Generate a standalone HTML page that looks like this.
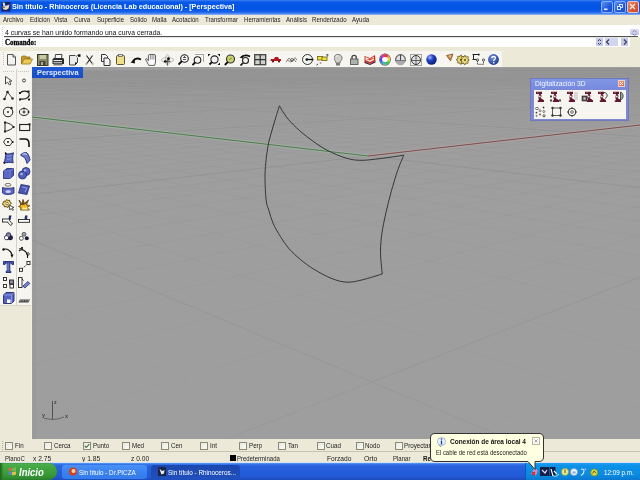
<!DOCTYPE html><html><head><meta charset="utf-8"><style>
*{margin:0;padding:0;box-sizing:border-box}
html,body{width:640px;height:480px;overflow:hidden;background:#ece9d8;font-family:"Liberation Sans",sans-serif;font-size:8px;color:#000}
div,span,svg{position:absolute}
.t{white-space:nowrap;transform-origin:0 0;line-height:1}
</style></head><body><div style="left:0px;top:0px;width:640px;height:15px;background:linear-gradient(#3a7ef0 0px,#0a58e8 2px,#0254e4 9px,#1a62ea 12px,#4a86f2 13.5px,#9ab8f0 15px);"></div>
<svg style="left:1px;top:1px;" width="10" height="12" viewBox="0 0 10 12"><rect x="0.5" y="1" width="9" height="9.5" fill="#14206a"/><path d="M1.5 1.5 L3.5 1.5 L4.5 4.5 L2.5 5.5 Z" fill="#c8e0ff"/><path d="M1.5 5.5 L5 4.8 L8.5 3.5 L7.5 7.5 L5 9 L2.2 8.3 Z" fill="#e8dcc0"/><circle cx="3" cy="6.3" r="0.7" fill="#222"/></svg>
<span class="t" style="left:12px;top:3px;font-size:8px;color:#fff;transform:scaleX(0.9);font-weight:bold;">Sin título - Rhinoceros (Licencia Lab educacional) - [Perspectiva]</span>
<div style="left:601px;top:1px;width:12px;height:12px;background:linear-gradient(135deg,#5a90f6,#2058dc 60%,#1a4ed0);border:1px solid #8ab0f8;border-radius:2px;"></div>
<svg style="left:601px;top:1px;" width="12" height="12" viewBox="0 0 12 12"><rect x="3" y="7.5" width="3.5" height="1.6" fill="#e8f0ff"/></svg>
<div style="left:614px;top:1px;width:12px;height:12px;background:linear-gradient(135deg,#5a90f6,#2058dc 60%,#1a4ed0);border:1px solid #8ab0f8;border-radius:2px;"></div>
<svg style="left:614px;top:1px;" width="12" height="12" viewBox="0 0 12 12"><rect x="5.5" y="3.5" width="3" height="3" fill="none" stroke="#e8f0ff" stroke-width="0.9"/><rect x="3.5" y="5.5" width="3" height="3" fill="#2058dc" stroke="#e8f0ff" stroke-width="0.9"/></svg>
<div style="left:627px;top:1px;width:12px;height:12px;background:linear-gradient(135deg,#e88a6a,#d85a38 60%,#c84a30);border:1px solid #f4c4bc;border-radius:2px;"></div>
<svg style="left:627px;top:1px;" width="12" height="12" viewBox="0 0 12 12"><path d="M3 3 L8 8 M8 3 L3 8" stroke="#ffe8e0" stroke-width="1.3"/></svg>
<div style="left:0px;top:15px;width:640px;height:10px;background:#ece9d8;"></div>
<span class="t" style="left:3px;top:15.8px;font-size:7px;color:#222;transform:scaleX(0.87);">Archivo</span>
<span class="t" style="left:30px;top:15.8px;font-size:7px;color:#222;transform:scaleX(0.87);">Edición</span>
<span class="t" style="left:54px;top:15.8px;font-size:7px;color:#222;transform:scaleX(0.87);">Vista</span>
<span class="t" style="left:74px;top:15.8px;font-size:7px;color:#222;transform:scaleX(0.87);">Curva</span>
<span class="t" style="left:97px;top:15.8px;font-size:7px;color:#222;transform:scaleX(0.87);">Superficie</span>
<span class="t" style="left:130px;top:15.8px;font-size:7px;color:#222;transform:scaleX(0.87);">Sólido</span>
<span class="t" style="left:152px;top:15.8px;font-size:7px;color:#222;transform:scaleX(0.87);">Malla</span>
<span class="t" style="left:172px;top:15.8px;font-size:7px;color:#222;transform:scaleX(0.87);">Acotación</span>
<span class="t" style="left:205px;top:15.8px;font-size:7px;color:#222;transform:scaleX(0.87);">Transformar</span>
<span class="t" style="left:244px;top:15.8px;font-size:7px;color:#222;transform:scaleX(0.87);">Herramientas</span>
<span class="t" style="left:286px;top:15.8px;font-size:7px;color:#222;transform:scaleX(0.87);">Análisis</span>
<span class="t" style="left:312px;top:15.8px;font-size:7px;color:#222;transform:scaleX(0.87);">Renderizado</span>
<span class="t" style="left:352px;top:15.8px;font-size:7px;color:#222;transform:scaleX(0.87);">Ayuda</span>
<div style="left:0px;top:25px;width:640px;height:22px;background:#fff;"></div>
<div style="left:4px;top:36px;width:634px;height:1px;background:#505050;"></div>
<div style="left:4px;top:37px;width:634px;height:1px;background:#e4e4e4;"></div>
<svg style="left:1px;top:27px;" width="3" height="20" viewBox="0 0 3 20"><rect x="1" y="0" width="1" height="1" fill="#d4d2c8"/><rect x="1" y="2" width="1" height="1" fill="#d4d2c8"/><rect x="1" y="4" width="1" height="1" fill="#d4d2c8"/><rect x="1" y="6" width="1" height="1" fill="#d4d2c8"/><rect x="1" y="8" width="1" height="1" fill="#d4d2c8"/><rect x="1" y="10" width="1" height="1" fill="#d4d2c8"/><rect x="1" y="12" width="1" height="1" fill="#d4d2c8"/><rect x="1" y="14" width="1" height="1" fill="#d4d2c8"/><rect x="1" y="16" width="1" height="1" fill="#d4d2c8"/><rect x="1" y="18" width="1" height="1" fill="#d4d2c8"/></svg>
<span class="t" style="left:5px;top:28.6px;font-size:7.5px;color:#111;transform:scaleX(0.915);">4 curvas se han unido formando una curva cerrada.</span>
<span class="t" style="left:5px;top:38.6px;font-size:7.3px;color:#000;transform:scaleX(0.95);font-weight:bold;font-family:'Liberation Serif',serif;-webkit-text-stroke:0.3px #000;">Comando:</span>
<div style="left:630px;top:28.5px;width:9px;height:6.5px;background:linear-gradient(#dcdff2,#c4c8e6);border-radius:1px;"></div>
<svg style="left:630px;top:28.5px;" width="9" height="7" viewBox="0 0 9 7"><path d="M2.5 3 L4.5 1.5 L6.5 3 M2.5 5 L4.5 6.3 L6.5 5" fill="none" stroke="#6a70a0" stroke-width="0.8"/></svg>
<div style="left:596px;top:38px;width:7px;height:8px;background:#c6cae6;"></div>
<div style="left:605px;top:38px;width:13px;height:8px;background:#d2d5ee;"></div>
<div style="left:621px;top:38px;width:7px;height:8px;background:#c6cae6;"></div>
<div style="left:630px;top:37px;width:10px;height:10px;background:#ece9d8;"></div>
<svg style="left:596px;top:38px;" width="32" height="8" viewBox="0 0 32 8"><path d="M2 3 L3.5 1.5 L5 3 M2 5 L3.5 6.5 L5 5" stroke="#3a4070" fill="none"/><path d="M13 1.5 L10.5 4 L13 6.5" stroke="#3a4070" fill="none" stroke-width="1.3"/><path d="M28 1.5 L30.5 4 L28 6.5" stroke="#3a4070" fill="none" stroke-width="1.3"/></svg>
<div style="left:0px;top:47px;width:640px;height:20px;background:#ece9d8;"></div>
<div style="left:0px;top:51px;width:502px;height:16px;background:#f6f5ef;"></div>
<svg style="left:2px;top:52px;" width="3" height="14" viewBox="0 0 3 14"><rect x="1" y="0" width="1" height="1" fill="#cac6b8"/><rect x="1" y="2" width="1" height="1" fill="#cac6b8"/><rect x="1" y="4" width="1" height="1" fill="#cac6b8"/><rect x="1" y="6" width="1" height="1" fill="#cac6b8"/><rect x="1" y="8" width="1" height="1" fill="#cac6b8"/><rect x="1" y="10" width="1" height="1" fill="#cac6b8"/><rect x="1" y="12" width="1" height="1" fill="#cac6b8"/></svg>
<svg style="left:7px;top:54px;" width="14" height="13" viewBox="0 0 14 13"><path d="M0.5 0.5 H6 L8.5 3 V11 H0.5 Z" fill="#f2f2f2" stroke="#555"/><path d="M6 0.5 V3 H8.5" fill="#ccc" stroke="#555"/></svg>
<svg style="left:21px;top:55px;" width="14" height="13" viewBox="0 0 14 13"><path d="M0.5 2 L1.5 1 H4.5 L5.5 2 H9 V4 H3 L0.5 9 Z" fill="#c89a2a" stroke="#8a6a10" stroke-width="0.8"/><path d="M0.5 9 L3 4 H11.5 L9 9 Z" fill="#ecc85a" stroke="#9a7a18" stroke-width="0.8"/></svg>
<svg style="left:37px;top:54px;" width="14" height="13" viewBox="0 0 14 13"><rect x="0.5" y="0.5" width="10.5" height="11" fill="#8c8c64" stroke="#3a3a28"/><rect x="2.5" y="1" width="6.5" height="4" fill="#c8c8a8"/><rect x="2.5" y="7" width="6" height="4.5" fill="#44443a"/><rect x="4" y="8" width="2" height="3" fill="#aaa"/></svg>
<svg style="left:52px;top:54px;" width="14" height="13" viewBox="0 0 14 13"><path d="M3.5 0.5 H10 L9.5 4.5 H3 Z" fill="#f4f4f4" stroke="#333" stroke-width="0.9"/><path d="M0.5 5 L2 4 H11 L12 5 V10 H0.5 Z" fill="#2a2a2a"/><rect x="1.5" y="6" width="8.5" height="1.1" fill="#e8e8e8"/><rect x="1.5" y="8.2" width="8.5" height="1.1" fill="#d8d8d8"/><rect x="1.5" y="10" width="9" height="1.5" fill="#777"/></svg>
<svg style="left:69px;top:54px;" width="14" height="13" viewBox="0 0 14 13"><path d="M0.5 1.5 H6.5 L8.5 3.5 V8.5 L6 11 H0.5 Z" fill="#ececec" stroke="#333" stroke-width="0.9"/><path d="M8.5 8.5 L6 11 V8.5 Z" fill="#111"/><path d="M6.3 1 L8.5 3.2" stroke="#fff" stroke-width="1"/><rect x="9" y="0.3" width="2.5" height="2.5" fill="#111"/><path d="M7 2.5 L9.5 0.8" stroke="#555" stroke-width="0.8"/></svg>
<svg style="left:85px;top:55px;" width="14" height="13" viewBox="0 0 14 13"><path d="M1.5 0.5 L7.5 9 M7.5 0.5 L1.5 9" stroke="#222" stroke-width="1.1"/><path d="M0.5 9.5 L2.5 8 M8.5 9.5 L6.5 8" stroke="#aaa" stroke-width="1.6"/></svg>
<svg style="left:101px;top:54px;" width="14" height="13" viewBox="0 0 14 13"><path d="M0.5 0.5 H4.5 L6.5 2.5 V7.5 H0.5 Z" fill="#f4f4f4" stroke="#333"/><path d="M3 4 H7 L9 6 V11.5 H3 Z" fill="#f4f4f4" stroke="#333"/></svg>
<svg style="left:116px;top:54px;" width="14" height="13" viewBox="0 0 14 13"><rect x="0.5" y="1.5" width="8" height="9" rx="1" fill="#ede088" stroke="#5a5430"/><rect x="2.5" y="0.3" width="4" height="2.2" fill="#ddd" stroke="#555" stroke-width="0.7"/></svg>
<svg style="left:130px;top:56px;" width="14" height="13" viewBox="0 0 14 13"><path d="M3 5 Q6 1 11 3.5" fill="none" stroke="#111" stroke-width="1.8"/><path d="M0.5 6.5 L4.5 3 L5 7.5 Z" fill="#111"/></svg>
<svg style="left:145px;top:54px;" width="14" height="13" viewBox="0 0 14 13"><path d="M0.5 5.2 L1.6 4.6 L3.4 6.8 V1.8 Q3.4 0.5 4.6 0.5 H9.2 Q10.5 0.5 10.5 1.8 V8 L9.6 11.4 H3.8 Z" fill="#fbfbfb" stroke="#3a3a3a" stroke-width="0.8"/><path d="M5.4 1 V5.5 M7.1 1 V5.5 M8.8 1 V5.5" stroke="#888" stroke-width="0.9"/></svg>
<svg style="left:161px;top:54px;" width="14" height="13" viewBox="0 0 14 13"><ellipse cx="6.5" cy="6" rx="6" ry="2.6" fill="none" stroke="#b8b8b8" stroke-width="0.9"/><ellipse cx="6.5" cy="6" rx="1.8" ry="5.3" fill="none" stroke="#aaa" stroke-width="0.9"/><path d="M6.5 4 V11.5 M4 7.5 H9.5" stroke="#444" stroke-width="0.8"/><ellipse cx="7.6" cy="4.8" rx="1.2" ry="1.6" fill="#111"/><ellipse cx="4.3" cy="7.4" rx="1.6" ry="1.1" fill="#111"/></svg>
<svg style="left:178px;top:54px;" width="14" height="13" viewBox="0 0 14 13"><circle cx="6.5" cy="4.5" r="3.8" fill="#f4f4f4" stroke="#222" stroke-width="1.1"/><path d="M4 7 L0.5 10.5" stroke="#111" stroke-width="1.8"/><path d="M5 3.5 H8 M5 5.5 H8 M6.5 2 V3.5" stroke="#333" stroke-width="0.8"/></svg>
<svg style="left:192px;top:54px;" width="14" height="13" viewBox="0 0 14 13"><path d="M3.5 0.5 H11.5 V8.5" fill="none" stroke="#555" stroke-dasharray="1 1"/><circle cx="5.5" cy="6" r="3.3" fill="#f4f4f4" stroke="#222" stroke-width="1.1"/><path d="M3 8.5 L0.5 11" stroke="#111" stroke-width="1.8"/></svg>
<svg style="left:208px;top:54px;" width="14" height="13" viewBox="0 0 14 13"><circle cx="6.5" cy="5.5" r="3.6" fill="#f4f4f4" stroke="#222" stroke-width="1.1"/><path d="M4 8 L1.5 10.5" stroke="#111" stroke-width="1.8"/><path d="M0 0 H2.5 L0 2.5 Z M12 0 V2.5 L9.5 0 Z M12 11 H9.5 L12 8.5 Z" fill="#111"/></svg>
<svg style="left:224px;top:54px;" width="14" height="13" viewBox="0 0 14 13"><circle cx="6.5" cy="5" r="4" fill="#c8d070" stroke="#333" stroke-width="1.1"/><path d="M5 6 L7 4 L8 5" stroke="#8a9430" fill="none"/><path d="M3.8 8 L0.8 11" stroke="#111" stroke-width="1.8"/></svg>
<svg style="left:239px;top:54px;" width="14" height="13" viewBox="0 0 14 13"><path d="M3 3 Q6 0 11 2.5" fill="none" stroke="#111" stroke-width="1.6"/><path d="M0.5 3.5 L4 1 L4 4.5 Z" fill="#111"/><circle cx="6.5" cy="6.5" r="3" fill="#f4f4f4" stroke="#222" stroke-width="1.1"/><path d="M4 9 L1.5 11.5" stroke="#111" stroke-width="1.7"/></svg>
<svg style="left:254px;top:54px;" width="14" height="13" viewBox="0 0 14 13"><rect x="0.7" y="0.7" width="11" height="10" fill="#d0d0cc" stroke="#444" stroke-width="1.3"/><path d="M6.2 0.7 V10.7 M0.7 5.7 H11.7" stroke="#333" stroke-width="1.2"/></svg>
<svg style="left:270px;top:56px;" width="14" height="13" viewBox="0 0 14 13"><path d="M0.5 4.5 L1 3 H4 L5 1 H8 L9 3 H11 V5 H0.5 Z" fill="#b01820"/><circle cx="3" cy="5.5" r="1" fill="#500"/><circle cx="9" cy="5.5" r="1" fill="#500"/></svg>
<svg style="left:285px;top:56px;" width="14" height="13" viewBox="0 0 14 13"><path d="M1 6 L4 2 L7 5 L10 1.5 L12 4 M2 4 L6 6 L9 3 L11 6" fill="none" stroke="#777" stroke-width="0.9"/><circle cx="7" cy="4" r="1.5" fill="none" stroke="#555" stroke-width="0.8"/></svg>
<svg style="left:302px;top:54px;" width="14" height="13" viewBox="0 0 14 13"><circle cx="5.5" cy="5.5" r="5" fill="#f6f6f0" stroke="#222" stroke-width="0.9"/><path d="M4.5 5.5 H11.5" stroke="#111" stroke-width="1.3"/><circle cx="4.8" cy="5.5" r="1.3" fill="#111"/></svg>
<svg style="left:316px;top:54px;" width="14" height="13" viewBox="0 0 14 13"><rect x="1.5" y="2.5" width="5" height="3.5" fill="#f0e040" stroke="#6a6010" stroke-width="0.8"/><rect x="6" y="3" width="5" height="3.5" fill="#f0e040" stroke="#6a6010" stroke-width="0.8"/><path d="M10 1 L12 0.5 L11.5 2.5" fill="none" stroke="#333" stroke-width="0.8"/><path d="M0.5 11 L2 10" stroke="#333"/><circle cx="4.5" cy="9" r="1" fill="#c090b0"/></svg>
<svg style="left:334px;top:54px;" width="14" height="13" viewBox="0 0 14 13"><path d="M4 0.5 C7 0.5 8 2.5 8 4 C8 6 6.2 7 6 9 H2 C1.8 7 0 6 0 4 C0 2.5 1 0.5 4 0.5 Z" fill="#d0d0cc" stroke="#6a6a6a" stroke-width="0.9"/><path d="M2 2.5 C2.5 1.8 3.5 1.5 4.5 1.6" stroke="#f4f4f4" fill="none"/><rect x="2" y="9" width="4" height="2.5" fill="#7a7a7a"/></svg>
<svg style="left:350px;top:54px;" width="14" height="13" viewBox="0 0 14 13"><path d="M2 5 V3.2 C2 0.8 6.2 0.8 6.2 3.2 V5" fill="none" stroke="#444" stroke-width="1.4"/><rect x="0.5" y="5" width="7.5" height="5.5" fill="#b0b0ac" stroke="#555" stroke-width="0.9"/></svg>
<svg style="left:364px;top:54px;" width="14" height="13" viewBox="0 0 14 13"><path d="M0.5 2 L6 4 L11 1 L11.5 7 L6 10 L0.5 7.5 Z" fill="#c83020"/><path d="M1.5 3 L6 5 L10 2.5 L10 6 L6 8 L1.5 6 Z" fill="#f8f0f0"/><path d="M2 5 L6 6.5 L10 4.5 L10 3.5 L6 5 Z" fill="#e04828"/><path d="M0.5 7.5 L6 10 L11.5 7 L11.5 8.5 L6 11 L0.5 9 Z" fill="#402048"/></svg>
<div style="left:379.5px;top:54px;width:10.5px;height:10.5px;background:conic-gradient(from 20deg,#f03030,#f0e040,#40c040,#40c0c0,#3040e0,#c040c0,#f03030);border-radius:50%;box-shadow:0 0 0 0.6px #333;"></div>
<div style="left:382px;top:56.5px;width:5.5px;height:5.5px;background:radial-gradient(#ffffff,#f8e8f8);border-radius:50%;"></div>
<svg style="left:395px;top:54px;" width="14" height="13" viewBox="0 0 14 13"><circle cx="5.5" cy="5.5" r="4.8" fill="#e0e0e0" stroke="#333" stroke-width="1"/><path d="M5.5 0.7 V10.3 M0.7 6.5 H10.3" stroke="#333" stroke-width="0.9"/><path d="M0.7 6.5 A4.8 4.8 0 0 0 10.3 6.5 Z" fill="#aaa"/></svg>
<svg style="left:410px;top:54px;" width="14" height="13" viewBox="0 0 14 13"><rect x="0.5" y="0.5" width="11" height="11" fill="none" stroke="#555" stroke-dasharray="1 1"/><circle cx="6" cy="6" r="4.5" fill="#e0e0e0" stroke="#333" stroke-width="1"/><path d="M6 1.5 V10.5 M1.5 6.5 H10.5" stroke="#444" stroke-width="0.8"/></svg>
<svg style="left:426px;top:54px;" width="14" height="13" viewBox="0 0 14 13"><defs><radialGradient id="bs" cx="0.35" cy="0.3" r="0.8"><stop offset="0" stop-color="#a0b8ff"/><stop offset="0.4" stop-color="#2040c0"/><stop offset="1" stop-color="#081868"/></radialGradient></defs><circle cx="5.5" cy="5.5" r="5.2" fill="url(#bs)"/></svg>
<svg style="left:446px;top:53px;" width="14" height="13" viewBox="0 0 14 13"><path d="M0.5 2.5 L7 1 L4.5 7.8 Z" fill="#c88a48" stroke="#6a4420" stroke-width="0.7"/><path d="M2.5 2.8 L5.5 2 L4.3 5" fill="#f0c890"/></svg>
<svg style="left:456px;top:54px;" width="15" height="13" viewBox="0 0 15 13"><path d="M3.5 1 L4.5 1 L4.8 2.2 L6 2.6 L6.8 1.8 L7.5 2.6 L6.9 3.6 L7.3 4.8 L8 5 V6 L7 6.3 L6.6 7.5 L7.3 8.3 L6.5 9.1 L5.6 8.5 L4.5 8.9 L4.3 10 H3.3 L3 8.9 L1.9 8.5 L1 9.1 L0.3 8.3 L0.9 7.4 L0.6 6.3 L-0.4 6 V5 L0.6 4.7 L1 3.6 L0.4 2.6 L1.2 1.8 L2.1 2.4 L3.2 2.1 Z" transform="translate(1,0.2)" fill="#e8d878" stroke="#5a5020" stroke-width="0.8"/><path d="M3.5 1 L4.5 1 L4.8 2.2 L6 2.6 L6.8 1.8 L7.5 2.6 L6.9 3.6 L7.3 4.8 L8 5 V6 L7 6.3 L6.6 7.5 L7.3 8.3 L6.5 9.1 L5.6 8.5 L4.5 8.9 L4.3 10 H3.3 L3 8.9 L1.9 8.5 L1 9.1 L0.3 8.3 L0.9 7.4 L0.6 6.3 L-0.4 6 V5 L0.6 4.7 L1 3.6 L0.4 2.6 L1.2 1.8 L2.1 2.4 L3.2 2.1 Z" transform="translate(5,0.6)" fill="#e8d878" stroke="#5a5020" stroke-width="0.8"/><circle cx="5" cy="5.7" r="1" fill="#5a5020"/><circle cx="9" cy="6.1" r="1" fill="#5a5020"/></svg>
<svg style="left:472px;top:53px;" width="14" height="13" viewBox="0 0 14 13"><path d="M0.5 1.5 H6.5 M1.5 1.5 V6.5 M0.5 6.5 H4.5" fill="none" stroke="#222" stroke-width="1"/><rect x="6" y="0.8" width="1.6" height="1.6" fill="#111"/><circle cx="5.5" cy="7" r="1.1" fill="#fff" stroke="#222" stroke-width="0.8"/><circle cx="11.5" cy="7" r="1.1" fill="#fff" stroke="#222" stroke-width="0.8"/><path d="M5.5 8.2 V11.3 H11.5 V8.2" fill="none" stroke="#222" stroke-width="0.9" stroke-dasharray="1.2 0.8"/></svg>
<svg style="left:488px;top:54px;" width="14" height="13" viewBox="0 0 14 13"><defs><radialGradient id="hp" cx="0.4" cy="0.35" r="0.75"><stop offset="0" stop-color="#7090e0"/><stop offset="1" stop-color="#182e88"/></radialGradient></defs><circle cx="5.5" cy="5.5" r="5.4" fill="url(#hp)"/><path d="M3.8 4 C3.8 2 7.4 2 7.4 4 C7.4 5.5 5.6 5.3 5.6 7" fill="none" stroke="#fff" stroke-width="1.3"/><rect x="5" y="8" width="1.4" height="1.4" fill="#fff"/></svg>
<div style="left:0px;top:67px;width:32px;height:372px;background:#ece9d8;"></div>
<div style="left:0px;top:67px;width:31px;height:239px;background:#f6f5ef;"></div>
<div style="left:16px;top:69px;width:1px;height:236px;background:#d4d2c8;"></div>
<div style="left:0px;top:305px;width:31px;height:1px;background:#d8d6ca;"></div>
<svg style="left:3px;top:71px;" width="28" height="2" viewBox="0 0 28 2"><rect x="0" y="0" width="1" height="1" fill="#c4c0b2"/><rect x="2" y="0" width="1" height="1" fill="#c4c0b2"/><rect x="4" y="0" width="1" height="1" fill="#c4c0b2"/><rect x="6" y="0" width="1" height="1" fill="#c4c0b2"/><rect x="8" y="0" width="1" height="1" fill="#c4c0b2"/><rect x="10" y="0" width="1" height="1" fill="#c4c0b2"/><rect x="15" y="0" width="1" height="1" fill="#c4c0b2"/><rect x="17" y="0" width="1" height="1" fill="#c4c0b2"/><rect x="19" y="0" width="1" height="1" fill="#c4c0b2"/><rect x="21" y="0" width="1" height="1" fill="#c4c0b2"/><rect x="23" y="0" width="1" height="1" fill="#c4c0b2"/><rect x="25" y="0" width="1" height="1" fill="#c4c0b2"/></svg>
<svg style="left:5px;top:76px;" width="13" height="13" viewBox="0 0 13 13"><path d="M0.5 0.5 V8 L2.5 6.2 L4.5 9 L6 8 L4.2 5.3 L6.8 5 Z" fill="#fff" stroke="#333" stroke-width="0.9"/></svg>
<svg style="left:21px;top:78px;" width="13" height="13" viewBox="0 0 13 13"><circle cx="3" cy="2.5" r="1.5" fill="none" stroke="#333" stroke-width="0.9"/></svg>
<svg style="left:3px;top:90px;" width="13" height="13" viewBox="0 0 13 13"><path d="M4.5 2 L1.5 9 M4.5 2 L9.5 8.5" stroke="#333" stroke-width="0.9"/><circle cx="4.5" cy="2" r="1.3" fill="#222"/><circle cx="1.5" cy="9" r="1.3" fill="#222"/><circle cx="9.5" cy="8.5" r="1.3" fill="#333"/></svg>
<svg style="left:19px;top:90px;" width="13" height="13" viewBox="0 0 13 13"><path d="M1 3 C3 1 8 0 10 3 C11 6 9 10 1 9" fill="none" stroke="#222" stroke-width="1.1"/><rect x="0" y="2" width="2" height="2" fill="#222"/><rect x="8.5" y="0.5" width="2" height="2" fill="#222"/><rect x="0" y="8.5" width="2" height="2" fill="#222"/><rect x="9" y="8.5" width="2" height="2" fill="#222"/></svg>
<svg style="left:3px;top:106px;" width="13" height="13" viewBox="0 0 13 13"><circle cx="5" cy="6" r="4.8" fill="none" stroke="#222" stroke-width="1"/><circle cx="5" cy="6" r="0.9" fill="#222"/><circle cx="8.5" cy="2" r="1.2" fill="#222"/></svg>
<svg style="left:19px;top:107px;" width="13" height="13" viewBox="0 0 13 13"><ellipse cx="5" cy="5" rx="4.7" ry="3.5" fill="none" stroke="#222" stroke-width="1"/><circle cx="5" cy="5" r="1" fill="none" stroke="#222"/><circle cx="5" cy="1.5" r="1" fill="#222"/><circle cx="9.5" cy="5" r="1" fill="#222"/></svg>
<svg style="left:4px;top:121px;" width="13" height="13" viewBox="0 0 13 13"><path d="M1 1.5 V10.5 M1 1.5 C5 2 8.5 4 9.5 6 " fill="none" stroke="#222" stroke-width="1"/><path d="M1 10.5 C5 9.5 8 8 9.5 6" fill="none" stroke="#222" stroke-width="1"/><rect x="0" y="0.5" width="2" height="2" fill="#222"/><rect x="0" y="9.5" width="2" height="2" fill="#222"/><rect x="8.5" y="5" width="2" height="2" fill="#222"/></svg>
<svg style="left:19px;top:123px;" width="13" height="13" viewBox="0 0 13 13"><rect x="0.7" y="1.5" width="10" height="6" fill="none" stroke="#222" stroke-width="1.1"/><rect x="9.5" y="0.3" width="2" height="2" fill="#222"/></svg>
<svg style="left:3px;top:138px;" width="13" height="13" viewBox="0 0 13 13"><path d="M3 0.5 H7 L9.5 4 L7 7.5 H3 L0.5 4 Z" fill="none" stroke="#222" stroke-width="0.9"/><circle cx="5" cy="4" r="1" fill="#222"/><circle cx="9.8" cy="4" r="1" fill="#222"/></svg>
<svg style="left:19px;top:138px;" width="13" height="13" viewBox="0 0 13 13"><path d="M0.5 1 H6 C9 1 10 3 10 6 V9" fill="none" stroke="#111" stroke-width="1.6"/></svg>
<svg style="left:3px;top:152px;" width="13" height="13" viewBox="0 0 13 13"><path d="M2.5 1.5 C5 2.5 8 1.5 10.5 0.8 C9.5 4 9.5 7.5 10.2 10.8 C7 10 4 10.5 1 11 C2 7.5 2.8 4.5 2.5 1.5 Z" fill="#5a68c4" stroke="#1e2a70" stroke-width="0.9"/><path d="M4 4 C6 4.5 7.5 4 8.5 3.5 M4 7 C6 7.5 7.5 7 8.5 6.5" stroke="#a8b2f0" stroke-width="0.7" fill="none"/><path d="M0.5 10.5 L2 11.5 M2 0.5 L3.5 2" stroke="#111" stroke-width="1.3"/></svg>
<svg style="left:20px;top:152px;" width="13" height="13" viewBox="0 0 13 13"><path d="M0.5 3 C3 0.5 6 0 7 1 C9 3 10 7 10 8 L7 11.5 C6 8 5 5 2 4 Z" fill="#6a74c8" stroke="#1e2a70" stroke-width="0.9"/><path d="M2.5 2.5 C4 1.5 6 1.5 7 3" stroke="#e8eaff" fill="none" stroke-width="1"/></svg>
<svg style="left:3px;top:168px;" width="13" height="13" viewBox="0 0 13 13"><path d="M0.5 3 L4 0.5 H10.5 V7.5 L7 10.5 H0.5 Z" fill="#4a58b8" stroke="#1e2a70" stroke-width="0.8"/><path d="M0.5 3 H7 L10.5 0.5 M7 3 V10.5" fill="none" stroke="#8894e0" stroke-width="0.8"/><path d="M1 3.5 H6.5 V10 H1 Z" fill="#5a68c8"/></svg>
<svg style="left:18px;top:167px;" width="13" height="13" viewBox="0 0 13 13"><circle cx="8" cy="4.5" r="4" fill="#5864c0" stroke="#1e2a70" stroke-width="0.8"/><circle cx="4.5" cy="8" r="4" fill="#5060b8" stroke="#1e2a70" stroke-width="0.8"/><circle cx="3.5" cy="7" r="1.3" fill="#a8b0ee"/><circle cx="7" cy="3.5" r="1.2" fill="#a8b0ee"/></svg>
<svg style="left:2px;top:183px;" width="13" height="13" viewBox="0 0 13 13"><ellipse cx="6" cy="1.8" rx="3" ry="1.4" fill="none" stroke="#666" stroke-width="0.9"/><path d="M0.5 4.5 C3 5.5 9 5.5 12 4.5 V10 C9 12 3 12 0.5 10 Z" fill="#5a66c0" stroke="#1e2a70" stroke-width="0.8"/><ellipse cx="6.2" cy="8.5" rx="2.8" ry="1.5" fill="#c8ccf4"/></svg>
<svg style="left:18px;top:184px;" width="13" height="13" viewBox="0 0 13 13"><path d="M3 0.5 L11.5 2 L9 10.5 L0.5 9 Z" fill="#4a58b0" stroke="#1e2a70" stroke-width="0.8"/><path d="M4 3 L9 4 L7 8" fill="none" stroke="#a0aaee" stroke-width="0.8"/></svg>
<svg style="left:2px;top:199px;" width="13" height="13" viewBox="0 0 13 13"><path d="M1 4 L2 2 L3.5 2.5 L4.5 0.5 L6 1.5 L7.5 1 L8 3 L9.5 4 L8 5.5 L8.5 7 L6.5 7 L6 8.5 L4 7.5 L2.5 8 L2 6 L0.5 5.5 Z" fill="#f0d880" stroke="#6a5418" stroke-width="1"/><circle cx="5" cy="4.5" r="1.3" fill="#f6f4ee" stroke="#6a5418" stroke-width="0.7"/><path d="M7 6 L12 8.5 L10 9 L11.5 11 L10.5 11.5 L9 9.5 L7.8 11 Z" fill="#fff" stroke="#333" stroke-width="0.8"/></svg>
<svg style="left:18px;top:199px;" width="13" height="13" viewBox="0 0 13 13"><path d="M1 1 L4 5 L5 0.5 L6.5 4.5 L10.5 1 L8.5 6 L12 6.5 L9 8.5 L11.5 11 H2.5 L3 8.5 L0.5 7.5 L3 6 Z" fill="#f0b818" stroke="#5a3a10" stroke-width="0.8"/><path d="M1 1 L4 5 L5 0.5 L6.5 4.5 L10.5 1 L8 5 L5 6 L3 6 Z" fill="#6a4a20"/><path d="M4 10.5 L5 8 L7 9 L9 8 L9.5 10.5 Z" fill="#fff0a0"/></svg>
<svg style="left:2px;top:215px;" width="13" height="13" viewBox="0 0 13 13"><path d="M7 0.5 H9.5 L8.5 5 H6.5 Z" fill="#203070"/><rect x="0.5" y="4" width="7" height="3" fill="#fff" stroke="#222" stroke-width="0.9"/><path d="M7.5 5.5 L10.5 9 L8.5 10.5 L5.5 7" fill="#fff" stroke="#222" stroke-width="0.9"/></svg>
<svg style="left:18px;top:215px;" width="13" height="13" viewBox="0 0 13 13"><path d="M7 0.5 H9.5 L9 4.5 H6.5 Z" fill="#203070"/><rect x="0.5" y="4.5" width="11" height="2.8" fill="#fff" stroke="#222" stroke-width="0.9"/><path d="M0.5 7.5 H11.5" stroke="#555"/></svg>
<svg style="left:4px;top:232px;" width="13" height="13" viewBox="0 0 13 13"><circle cx="4.5" cy="2.8" r="2.6" fill="#3a3a60"/><circle cx="2.8" cy="5.6" r="2.6" fill="#222240"/><circle cx="6.3" cy="5.6" r="2.6" fill="#222240"/><circle cx="2.5" cy="5.8" r="1.7" fill="#fff"/><circle cx="4.5" cy="3" r="1.8" fill="#8888aa"/></svg>
<svg style="left:19px;top:232px;" width="13" height="13" viewBox="0 0 13 13"><circle cx="5" cy="2.3" r="2" fill="#9a9ab8" stroke="#444" stroke-width="0.7"/><circle cx="2.3" cy="6.3" r="2" fill="#fff" stroke="#333" stroke-width="0.8"/><circle cx="7.8" cy="6.3" r="2" fill="#1a1a38"/></svg>
<svg style="left:2px;top:247px;" width="13" height="13" viewBox="0 0 13 13"><path d="M1 2.5 C5 1 9 3.5 10 8" fill="none" stroke="#111" stroke-width="1.1"/><path d="M8.5 7.5 L10 11 L11.5 7.5 Z" fill="#111"/><circle cx="1.5" cy="2.5" r="1.2" fill="#111"/></svg>
<svg style="left:18px;top:247px;" width="13" height="13" viewBox="0 0 13 13"><path d="M1 4 C4 1 8 3.5 9.5 8 V11" fill="none" stroke="#111" stroke-width="1.1"/><rect x="3" y="0" width="2" height="2" fill="#333"/><path d="M1 2 L4 1" stroke="#333"/><circle cx="10" cy="7" r="1.3" fill="none" stroke="#222" stroke-width="0.8"/></svg>
<svg style="left:3px;top:261px;" width="13" height="13" viewBox="0 0 13 13"><path d="M0.5 0.5 H10.5 V3.5 H9 L8.5 2 H6.8 V9.8 L8 10.5 V11.5 H3 V10.5 L4.2 9.8 V2 H2.5 L2 3.5 H0.5 Z" fill="#4a58b0" stroke="#1e2a70" stroke-width="0.9"/><path d="M5 2.5 V9.5" stroke="#a0aaf0" stroke-width="0.8"/></svg>
<svg style="left:19px;top:261px;" width="13" height="13" viewBox="0 0 13 13"><rect x="0.5" y="7.3" width="3" height="3" fill="#fff" stroke="#222" stroke-width="0.9"/><rect x="8" y="0.5" width="3" height="3" fill="#fff" stroke="#222" stroke-width="0.9"/><path d="M3.5 7.3 L8 3.5" stroke="#222" stroke-dasharray="1 1"/></svg>
<svg style="left:3px;top:277px;" width="13" height="13" viewBox="0 0 13 13"><rect x="0.5" y="0.5" width="3" height="3" fill="#fff" stroke="#222" stroke-width="0.9"/><rect x="0.5" y="7.5" width="3" height="3" fill="#fff" stroke="#222" stroke-width="0.9"/><rect x="6.5" y="3" width="4" height="4" fill="#8a8aa8" stroke="#222" stroke-width="0.9"/><rect x="7" y="7.5" width="3.5" height="3.5" fill="#fff" stroke="#222" stroke-width="0.9"/></svg>
<svg style="left:18px;top:277px;" width="13" height="13" viewBox="0 0 13 13"><rect x="0.5" y="0.5" width="3.5" height="10" fill="#fff" stroke="#222" stroke-width="0.9"/><path d="M4 4 L11.5 7.5 L10 10 L5 11.5 Z" fill="none"/><path d="M5 9 L10 4.5 L11.8 6.5 L6.8 11 Z" fill="#7a86c8" stroke="#1e2a70" stroke-width="0.8"/><path d="M4 2 L5.5 3.5" stroke="#222"/></svg>
<svg style="left:3px;top:292px;" width="13" height="13" viewBox="0 0 13 13"><path d="M0.5 3 L3 0.5 H11 V9 L8.5 11.5 H0.5 Z" fill="#5864c0" stroke="#1e2a70" stroke-width="0.9"/><path d="M0.5 3 H8.5 L11 0.5 M8.5 3 V11.5" fill="none" stroke="#98a4ee" stroke-width="0.8"/><rect x="4" y="7.5" width="3.5" height="3.5" fill="#fff"/></svg>
<svg style="left:18px;top:299px;" width="13" height="13" viewBox="0 0 13 13"><path d="M0.5 3.5 L2 0.5 H12 L10.5 3.5 Z" fill="#444"/><path d="M2 1.8 H11" stroke="#aaa" stroke-dasharray="1.5 1"/></svg>
<div style="left:32px;top:67px;width:608px;height:372px;background:#9e9e9e;"></div>
<div style="left:31px;top:67px;width:1px;height:372px;background:#f2f0e6;"></div>
<div style="left:33px;top:67px;width:3px;height:372px;background:#9a9a9a;"></div>
<svg style="left:32px;top:67px" width="608" height="372" viewBox="32 67 608 372"><defs><linearGradient id="fd" x1="0" y1="67" x2="0" y2="440" gradientUnits="userSpaceOnUse"><stop offset="0" stop-color="#fff" stop-opacity="0.3"/><stop offset="0.2" stop-color="#fff" stop-opacity="1"/><stop offset="0.5" stop-color="#fff" stop-opacity="0.85"/><stop offset="1" stop-color="#fff" stop-opacity="0.45"/></linearGradient><mask id="mk" maskUnits="userSpaceOnUse" x="32" y="67" width="608" height="372"><rect x="32" y="67" width="608" height="372" fill="url(#fd)"/></mask></defs><g mask="url(#mk)"><path d="M68 441.0L30 409.0M290 441.0L30 296.0M463 441.0L642 347.7M642 409.3L30 204.9M30 425.5L642 233.7M642 352.1L30 182.1M30 365.5L642 205.4M642 311.1L30 165.7M30 322.7L642 185.1M642 280.4L30 153.4M30 290.6L642 170.0M642 256.4L30 143.9M30 265.7L642 158.2M642 237.3L30 136.2M30 245.8L642 148.8M642 221.6L30 130.0M30 229.5L642 141.1M642 208.5L30 124.7M30 216.0L642 134.7M642 197.5L30 120.3M30 204.5L642 129.3M642 179.8L30 113.2M30 186.1L642 120.6M642 172.6L30 110.4M30 178.7L642 117.1M642 166.2L30 107.8M30 172.1L642 114.0M642 160.6L30 105.6M30 166.3L642 111.3M642 155.5L30 103.6M30 161.1L642 108.8M642 151.0L30 101.7M30 156.4L642 106.6M642 146.9L30 100.1M30 152.1L642 104.6M642 143.1L30 98.6M30 148.2L642 102.7M642 139.7L30 97.2M30 144.7L642 101.1M642 133.7L30 94.8M30 138.5L642 98.1M642 131.0L30 93.8M30 135.8L642 96.8M642 128.6L30 92.8M30 133.2L642 95.6M642 126.3L30 91.9M30 130.8L642 94.5M642 124.1L30 91.0M30 128.7L642 93.5M642 122.2L30 90.2M30 126.6L642 92.5M642 120.3L30 89.5M30 124.7L642 91.6M642 118.6L30 88.8M30 122.9L642 90.8M642 116.9L30 88.1M30 121.2L642 90.0M642 113.9L30 86.9M30 118.1L642 88.5M642 112.5L30 86.4M30 116.7L642 87.8M642 111.2L30 85.9M30 115.3L642 87.2M642 110.0L30 85.4M30 114.1L642 86.6M642 108.8L30 84.9M30 112.9L642 86.0M642 107.7L30 84.5M30 111.7L642 85.5M642 106.7L30 84.1M30 110.6L642 85.0M642 105.7L30 83.7M30 109.6L642 84.5M642 104.7L30 83.3M30 108.6L642 84.0M642 102.9L30 82.6M30 106.8L642 83.2M642 102.1L30 82.2M30 105.9L642 82.7M642 101.3L30 81.9M30 105.1L642 82.4M642 100.5L30 81.6M30 104.3L642 82.0M642 99.8L30 81.3M30 103.5L642 81.6M642 99.1L30 81.0M30 102.8L642 81.3M642 98.4L30 80.7M30 102.1L642 81.0M642 97.8L30 80.5M30 101.4L642 80.6M642 97.1L30 80.2M30 100.8L642 80.3M642 95.9L30 79.8M30 99.6L642 79.8M642 95.4L30 79.5M30 99.0L642 79.5M642 94.8L30 79.3M30 98.4L642 79.2M642 94.3L30 79.1M30 97.9L642 79.0M642 93.8L30 78.9M30 97.4L642 78.7M642 93.3L30 78.7M30 96.9L642 78.5M642 92.8L30 78.5M30 96.4L642 78.2M642 92.4L30 78.3M30 95.9L642 78.0M642 91.9L30 78.2M30 95.5L642 77.8M642 91.1L30 77.8M30 94.6L642 77.4M642 90.7L30 77.7M30 94.2L642 77.2M642 90.3L30 77.5M30 93.8L642 77.0M642 89.9L30 77.4M30 93.4L642 76.8M642 89.6L30 77.2M30 93.0L642 76.6M642 89.2L30 77.1M30 92.6L642 76.5M642 88.8L30 76.9M30 92.3L642 76.3M642 88.5L30 76.8M30 91.9L642 76.1M642 88.2L30 76.7M30 91.6L642 76.0M642 87.5L30 76.4M30 90.9L642 75.7M642 87.2L30 76.3M30 90.6L642 75.5M642 86.9L30 76.2M30 90.3L642 75.4M642 86.7L30 76.1M30 90.0L642 75.2M642 86.4L30 75.9M30 89.7L642 75.1M642 86.1L30 75.8M30 89.4L642 75.0M642 85.8L30 75.7M30 89.2L642 74.8M642 85.6L30 75.6M30 88.9L642 74.7M642 85.3L30 75.5M30 88.6L642 74.6M642 84.8L30 75.3M30 88.1L642 74.3M642 84.6L30 75.2M30 87.9L642 74.2M642 84.4L30 75.1M30 87.7L642 74.1M642 84.1L30 75.0M30 87.4L642 74.0M642 83.9L30 75.0M30 87.2L642 73.9M642 83.7L30 74.9M30 87.0L642 73.8M642 83.5L30 74.8M30 86.8L642 73.7M642 83.3L30 74.7M30 86.5L642 73.6M642 83.1L30 74.6M30 86.3L642 73.5M642 82.7L30 74.5M30 85.9L642 73.3M642 82.5L30 74.4M30 85.7L642 73.2M642 82.3L30 74.3M30 85.5L642 73.1M642 82.1L30 74.2M30 85.4L642 73.0M642 81.9L30 74.2M30 85.2L642 72.9M642 81.8L30 74.1M30 85.0L642 72.9M642 81.6L30 74.0M30 84.8L642 72.8M642 81.4L30 74.0M30 84.6L642 72.7M642 81.3L30 73.9M30 84.5L642 72.6M642 80.9L30 73.8M30 84.1L642 72.5M642 80.8L30 73.7M30 84.0L642 72.4M642 80.6L30 73.6M30 83.8L642 72.3M642 80.5L30 73.6M30 83.7L642 72.2M642 80.3L30 73.5M30 83.5L642 72.2M642 80.2L30 73.5M30 83.4L642 72.1M642 80.1L30 73.4M30 83.2L642 72.0M642 79.9L30 73.4M30 83.1L642 72.0M642 79.8L30 73.3M30 82.9L642 71.9M642 79.1L30 73.0M30 82.3L642 71.6M642 78.6L30 72.9M30 81.8L642 71.3M642 78.2L30 72.7M30 81.3L642 71.1M642 77.8L30 72.5M30 80.9L642 70.9M642 77.0L30 72.2M30 80.1L642 70.5M642 76.6L30 72.1M30 79.7L642 70.4M642 76.3L30 71.9M30 79.4L642 70.2M642 76.0L30 71.8M30 79.1L642 70.1M642 75.4L30 71.6M30 78.5L642 69.8M642 75.1L32 71.5M30 78.2L642 69.6M642 74.9L40 71.4M30 77.9L642 69.5M642 74.6L47 71.3M30 77.7L642 69.4M642 74.2L61 71.2M30 77.2L642 69.2M642 74.0L68 71.2M30 77.0L642 69.1M642 73.8L75 71.1M30 76.8L642 69.0M642 73.6L82 71.1M30 76.6L642 68.9M642 73.2L96 70.9M30 76.2L642 68.7M642 73.0L102 70.9M30 76.0L640 68.6M642 72.9L109 70.8M30 75.8L633 68.6M642 72.7L115 70.8M30 75.7L626 68.6M642 72.4L128 70.7M30 75.4L613 68.6M642 72.3L134 70.6M30 75.2L606 68.6M642 72.1L140 70.6M30 75.1L600 68.6M642 72.0L146 70.5M30 74.9L593 68.7M642 71.7L158 70.4M30 74.7L580 68.7M642 71.6L164 70.4M30 74.5L574 68.7M642 71.5L170 70.3M30 74.4L568 68.7M642 71.4L176 70.3M30 74.3L562 68.7M642 71.2L187 70.2M30 74.1L550 68.7M642 71.1L193 70.2M30 74.0L544 68.7M642 71.0L198 70.1M30 73.9L539 68.7M642 70.9L204 70.1M30 73.8L533 68.7M642 70.7L214 70.0M30 73.6L522 68.7M642 70.6L220 69.9M30 73.5L516 68.7M642 70.5L225 69.9M30 73.4L511 68.7M642 70.4L230 69.8M30 73.3L505 68.7M642 70.3L240 69.8M30 73.2L495 68.7M642 70.2L245 69.7M30 73.1L490 68.7M642 70.1L250 69.7M30 73.0L485 68.7M642 70.0L255 69.6M30 72.9L480 68.7M642 69.9L265 69.6M30 72.8L470 68.7M642 69.8L269 69.5M30 72.7L465 68.7M642 69.8L274 69.5M30 72.6L460 68.7M642 69.7L279 69.4M30 72.6L455 68.7M642 69.6L288 69.4M30 72.5L446 68.7M642 69.5L292 69.3M30 72.4L441 68.7M642 69.5L297 69.3M30 72.3L437 68.7M642 69.4L301 69.3M30 72.3L432 68.7M642 69.3L310 69.2M30 72.2L423 68.7M642 69.2L314 69.2M30 72.1L419 68.7M642 69.2L319 69.1M30 72.0L415 68.7M642 69.1L323 69.1M30 72.0L411 68.7M642 69.0L331 69.0M30 71.9L402 68.7M642 69.0L335 69.0M30 71.8L398 68.7M642 68.9L339 69.0M30 71.8L394 68.7M642 68.9L343 68.9M30 71.7L390 68.7M642 68.8L351 68.9M30 71.7L382 68.7M642 68.8L355 68.8M30 71.6L378 68.7M642 68.7L359 68.8M30 71.6L374 68.7M642 68.7L363 68.8M30 71.5L370 68.7" stroke="#8c8c8c" stroke-width="0.7" stroke-opacity="0.2" fill="none"/><path d="M513 441.0L30 239.1M221 441.0L642 276.4M30 194.7L368 156.0M642 188.0L368 156.0M642 136.6L30 96.0M30 141.5L642 99.5M642 115.4L30 87.5M30 119.6L642 89.2M642 103.8L30 82.9M30 107.7L642 83.6M642 96.5L30 80.0M30 100.2L642 80.0M642 91.5L30 78.0M30 95.0L642 77.6M642 87.9L30 76.5M30 91.3L642 75.8M642 85.1L30 75.4M30 88.4L642 74.5M642 82.9L30 74.5M30 86.1L642 73.4M642 81.1L30 73.8M30 84.3L642 72.5M642 79.6L30 73.3M30 82.8L642 71.8M642 77.4L30 72.3M30 80.5L642 70.7M642 75.7L30 71.7M30 78.7L642 69.9M642 74.4L54 71.3M30 77.4L642 69.3M642 73.4L89 71.0M30 76.4L642 68.8M642 72.5L122 70.7M30 75.5L620 68.6M642 71.9L153 70.5M30 74.8L587 68.7M642 71.3L182 70.2M30 74.2L556 68.7M642 70.8L209 70.0M30 73.7L527 68.7M642 70.3L235 69.8M30 73.2L500 68.7M642 70.0L260 69.6M30 72.9L475 68.7M642 69.6L283 69.4M30 72.5L451 68.7M642 69.3L306 69.2M30 72.2L428 68.7M642 69.1L327 69.1M30 71.9L406 68.7M642 68.8L347 68.9M30 71.7L386 68.7M642 68.6L367 68.7M30 71.5L367 68.7" stroke="#828282" stroke-width="0.9" stroke-opacity="0.4" fill="none"/></g><path d="M32 117 L368 156" stroke="#a8c0a8" stroke-width="3.0" stroke-opacity="0.45" fill="none"/><path d="M368 156 L640 125" stroke="#c4a8a8" stroke-width="3.0" stroke-opacity="0.45" fill="none"/><path d="M32 117 L368 156" stroke="#4e7a4e" stroke-width="1.1" stroke-opacity="1" fill="none"/><path d="M368 156 L640 125" stroke="#7a4e4e" stroke-width="1.1" stroke-opacity="1" fill="none"/><path d="M279.4 105.8C280.5 107.6 283.4 113.0 286.2 116.7C289.1 120.4 292.7 124.3 296.7 128.0C300.7 131.7 305.0 135.3 310.0 139.0C315.0 142.7 320.6 146.8 326.7 150.0C332.8 153.2 340.8 156.6 346.7 158.3C352.6 160.0 356.3 160.3 362.0 160.3C367.7 160.3 373.8 159.3 380.8 158.5C387.8 157.7 399.9 155.8 403.8 155.2C402.7 157.8 399.6 164.7 397.5 170.8C395.4 176.9 393.2 184.8 391.2 191.7C389.3 198.6 387.6 205.6 386.0 212.5C384.4 219.4 382.8 227.1 381.9 233.3C381.0 239.6 380.6 245.0 380.5 250.0C380.4 255.0 380.9 259.4 381.2 263.4C381.5 267.4 382.1 272.2 382.3 274.0C379.0 275.0 368.4 278.4 362.5 279.8C356.6 281.2 352.1 282.4 346.9 282.2C341.7 281.9 336.9 280.6 331.2 278.3C325.6 276.1 318.1 271.8 313.0 268.7C307.9 265.6 304.8 263.1 300.8 259.8C296.8 256.5 292.6 252.8 289.2 248.9C285.8 245.0 283.1 240.8 280.4 236.5C277.7 232.2 275.0 227.7 273.1 223.3C271.2 218.9 269.9 214.1 268.8 210.2C267.6 206.3 266.7 205.2 266.1 200.0C265.5 194.8 265.1 185.4 265.0 179.2C264.9 172.9 265.3 168.0 265.8 162.5C266.3 157.0 267.2 150.7 268.0 146.0C268.8 141.3 269.7 138.7 270.8 134.5C271.9 130.3 273.4 125.6 274.8 120.8C276.2 116.0 278.6 108.3 279.4 105.8Z" fill="none" stroke="#2a2a2a" stroke-width="0.9"/><path d="M52.5 401 V419.5" stroke="#4a4a4a" stroke-width="0.9" fill="none"/><path d="M52.5 419.5 Q58 419.5 64 417" stroke="#555" stroke-width="0.8" fill="none"/><path d="M52.5 419.5 L44 418.3" stroke="#555" stroke-width="0.8" fill="none"/></svg>
<span class="t" style="left:54px;top:399.2px;font-size:6px;color:#444;transform:scaleX(0.9);font-weight:bold;">z</span>
<span class="t" style="left:65.3px;top:412.8px;font-size:6px;color:#444;transform:scaleX(0.9);font-weight:bold;">x</span>
<span class="t" style="left:41.8px;top:412.4px;font-size:6px;color:#444;transform:scaleX(0.9);font-weight:bold;">y</span>
<div style="left:32px;top:67px;width:51px;height:10.5px;background:linear-gradient(#2058d4,#1a4cc4);"></div>
<span class="t" style="left:36.5px;top:68.6px;font-size:8px;color:#e0ecff;transform:scaleX(0.925);font-weight:bold;">Perspectiva</span>
<div style="left:530px;top:78px;width:99px;height:43px;background:#8088d0;border:1px solid #7078c0;"></div>
<div style="left:531px;top:79px;width:96px;height:10px;background:linear-gradient(#8296e6,#768ade);"></div>
<span class="t" style="left:535.3px;top:80.3px;font-size:7px;color:#f4f6ff;transform:scaleX(0.97);">Digitalización 3D</span>
<div style="left:618px;top:80px;width:7px;height:7px;background:linear-gradient(135deg,#f8a080,#e06040);border:1px solid #f0d0c0;"></div>
<svg style="left:618px;top:80px;" width="7" height="7" viewBox="0 0 7 7"><path d="M2 2 L5 5 M5 2 L2 5" stroke="#fff" stroke-width="1"/></svg>
<div style="left:534px;top:89.5px;width:92px;height:29.5px;background:#f6f5f0;"></div>
<svg style="left:0px;top:0px;pointer-events:none" width="640" height="480" viewBox="0 0 640 480"><g transform="translate(536,91.5)"><path d="M0 0.3 H6 V2.6 H4.6 L5.6 4.6 L4.6 6.6 L8 8.8 V10.6 H1.8 V8.8 H3 L2.4 6.2 L3 2.6 H0 Z" fill="#601830"/><circle cx="3.8" cy="5" r="0.9" fill="#f4e0ea"/><path d="M1 1.2 H3" stroke="#c07090" stroke-width="0.6"/></g><g transform="translate(551,91.5)"><path d="M0 0.3 H6 V2.6 H4.6 L5.6 4.6 L4.6 6.6 L8 8.8 V10.6 H1.8 V8.8 H3 L2.4 6.2 L3 2.6 H0 Z" fill="#601830"/><circle cx="3.8" cy="5" r="0.9" fill="#f4e0ea"/><path d="M1 1.2 H3" stroke="#c07090" stroke-width="0.6"/><rect x="-1" y="4" width="2" height="2" fill="#444"/><rect x="-1" y="8" width="2" height="2" fill="#444"/><rect x="8" y="8" width="2" height="2" fill="#444"/></g><g transform="translate(567,91.5)"><path d="M0 0.3 H6 V2.6 H4.6 L5.6 4.6 L4.6 6.6 L8 8.8 V10.6 H1.8 V8.8 H3 L2.4 6.2 L3 2.6 H0 Z" fill="#601830"/><circle cx="3.8" cy="5" r="0.9" fill="#f4e0ea"/><path d="M1 1.2 H3" stroke="#c07090" stroke-width="0.6"/><path d="M8 1 V9" stroke="#888" stroke-dasharray="1 1"/><path d="M10 1 V9" stroke="#888" stroke-dasharray="1 1"/></g><rect x="582" y="96" width="5" height="5" fill="#555" stroke="#222" stroke-width="0.6"/><rect x="583.5" y="97.5" width="2" height="2" fill="#ddd"/><g transform="translate(585,91.5)"><path d="M0 0.3 H6 V2.6 H4.6 L5.6 4.6 L4.6 6.6 L8 8.8 V10.6 H1.8 V8.8 H3 L2.4 6.2 L3 2.6 H0 Z" fill="#601830"/><circle cx="3.8" cy="5" r="0.9" fill="#f4e0ea"/><path d="M1 1.2 H3" stroke="#c07090" stroke-width="0.6"/></g><g transform="translate(598,91.5)"><path d="M0 0.3 H6 V2.6 H4.6 L5.6 4.6 L4.6 6.6 L8 8.8 V10.6 H1.8 V8.8 H3 L2.4 6.2 L3 2.6 H0 Z" fill="#601830"/><circle cx="3.8" cy="5" r="0.9" fill="#f4e0ea"/><path d="M1 1.2 H3" stroke="#c07090" stroke-width="0.6"/><path d="M6 1 C10 1 10 6 7 7" fill="none" stroke="#333" stroke-width="0.9"/></g><g transform="translate(613,91.5)"><path d="M0 0.3 H6 V2.6 H4.6 L5.6 4.6 L4.6 6.6 L8 8.8 V10.6 H1.8 V8.8 H3 L2.4 6.2 L3 2.6 H0 Z" fill="#601830"/><circle cx="3.8" cy="5" r="0.9" fill="#f4e0ea"/><path d="M1 1.2 H3" stroke="#c07090" stroke-width="0.6"/><path d="M7.5 0.5 C11 1.5 11 7.5 7.5 8.5 Z" fill="#9aa0a0" stroke="#333" stroke-width="0.8"/></g><g transform="translate(535,106.5)"><ellipse cx="2" cy="2" rx="1.6" ry="1.1" fill="none" stroke="#444" stroke-width="0.7"/><circle cx="8.5" cy="1" r="0.9" fill="#444"/><circle cx="5" cy="4.2" r="1" fill="none" stroke="#555" stroke-width="0.7"/><circle cx="8.8" cy="5" r="1" fill="none" stroke="#444" stroke-width="0.7"/><circle cx="1.5" cy="6.2" r="0.9" fill="#444"/><circle cx="1.5" cy="9.3" r="0.9" fill="#666"/><circle cx="5" cy="8" r="0.9" fill="#555"/><circle cx="9" cy="9.3" r="1.1" fill="none" stroke="#333" stroke-width="0.8"/></g><g transform="translate(551,107)"><path d="M1.5 1 H9.5 V8.5 H1.5 Z" fill="none" stroke="#333" stroke-width="0.8"/><circle cx="1.5" cy="1" r="1.2" fill="#333"/><circle cx="9.5" cy="1" r="1.2" fill="#333"/><circle cx="1.5" cy="8.5" r="1.2" fill="#333"/><circle cx="9.5" cy="8.5" r="1.2" fill="#333"/></g><g transform="translate(567,107)"><circle cx="5" cy="5" r="3.8" fill="none" stroke="#333" stroke-width="1"/><path d="M5 0 V1.5 M5 8.5 V10 M0 5 H1.5 M8.5 5 H10" stroke="#333" stroke-width="0.9"/><circle cx="5" cy="5" r="1.3" fill="none" stroke="#333" stroke-width="0.7"/></g></svg>
<div style="left:0px;top:439px;width:640px;height:13px;background:#ece9d8;"></div>
<div style="left:0px;top:450.5px;width:640px;height:1.5px;background:#c8c4b4;"></div>
<div style="left:0px;top:452px;width:640px;height:1px;background:#f6f4ec;"></div>
<svg style="left:1px;top:441px;" width="3" height="10" viewBox="0 0 3 10"><rect x="1" y="0" width="1" height="1" fill="#b0ac9c"/><rect x="1" y="2" width="1" height="1" fill="#b0ac9c"/><rect x="1" y="4" width="1" height="1" fill="#b0ac9c"/><rect x="1" y="6" width="1" height="1" fill="#b0ac9c"/><rect x="1" y="8" width="1" height="1" fill="#b0ac9c"/></svg>
<div style="left:5.0px;top:442px;width:8px;height:8px;background:linear-gradient(135deg,#e8e8e0,#fcfcf8);border:1px solid #8a8a7a;"></div>
<span class="t" style="left:14.8px;top:442.3px;font-size:7.4px;color:#222;transform:scaleX(0.84);">Fin</span>
<div style="left:44.0px;top:442px;width:8px;height:8px;background:linear-gradient(135deg,#e8e8e0,#fcfcf8);border:1px solid #8a8a7a;"></div>
<span class="t" style="left:53.8px;top:442.3px;font-size:7.4px;color:#222;transform:scaleX(0.84);">Cerca</span>
<div style="left:82.9px;top:442px;width:8px;height:8px;background:linear-gradient(135deg,#e8e8e0,#fcfcf8);border:1px solid #8a8a7a;"></div>
<svg style="left:82.9px;top:442px;" width="8" height="8" viewBox="0 0 8 8"><path d="M1.7 3.8 L3.3 5.5 L6.3 2.2" fill="none" stroke="#3a6a3a" stroke-width="1.1"/></svg>
<span class="t" style="left:92.7px;top:442.3px;font-size:7.4px;color:#222;transform:scaleX(0.84);">Punto</span>
<div style="left:121.9px;top:442px;width:8px;height:8px;background:linear-gradient(135deg,#e8e8e0,#fcfcf8);border:1px solid #8a8a7a;"></div>
<span class="t" style="left:131.70000000000002px;top:442.3px;font-size:7.4px;color:#222;transform:scaleX(0.84);">Med</span>
<div style="left:160.8px;top:442px;width:8px;height:8px;background:linear-gradient(135deg,#e8e8e0,#fcfcf8);border:1px solid #8a8a7a;"></div>
<span class="t" style="left:170.60000000000002px;top:442.3px;font-size:7.4px;color:#222;transform:scaleX(0.84);">Cen</span>
<div style="left:199.8px;top:442px;width:8px;height:8px;background:linear-gradient(135deg,#e8e8e0,#fcfcf8);border:1px solid #8a8a7a;"></div>
<span class="t" style="left:209.60000000000002px;top:442.3px;font-size:7.4px;color:#222;transform:scaleX(0.84);">Int</span>
<div style="left:238.7px;top:442px;width:8px;height:8px;background:linear-gradient(135deg,#e8e8e0,#fcfcf8);border:1px solid #8a8a7a;"></div>
<span class="t" style="left:248.5px;top:442.3px;font-size:7.4px;color:#222;transform:scaleX(0.84);">Perp</span>
<div style="left:277.7px;top:442px;width:8px;height:8px;background:linear-gradient(135deg,#e8e8e0,#fcfcf8);border:1px solid #8a8a7a;"></div>
<span class="t" style="left:287.5px;top:442.3px;font-size:7.4px;color:#222;transform:scaleX(0.84);">Tan</span>
<div style="left:316.6px;top:442px;width:8px;height:8px;background:linear-gradient(135deg,#e8e8e0,#fcfcf8);border:1px solid #8a8a7a;"></div>
<span class="t" style="left:326.40000000000003px;top:442.3px;font-size:7.4px;color:#222;transform:scaleX(0.84);">Cuad</span>
<div style="left:355.6px;top:442px;width:8px;height:8px;background:linear-gradient(135deg,#e8e8e0,#fcfcf8);border:1px solid #8a8a7a;"></div>
<span class="t" style="left:365.40000000000003px;top:442.3px;font-size:7.4px;color:#222;transform:scaleX(0.84);">Nodo</span>
<div style="left:394.5px;top:442px;width:8px;height:8px;background:linear-gradient(135deg,#e8e8e0,#fcfcf8);border:1px solid #8a8a7a;"></div>
<span class="t" style="left:404.3px;top:442.3px;font-size:7.4px;color:#222;transform:scaleX(0.84);">Proyectar</span>
<div style="left:0px;top:452px;width:640px;height:11px;background:#ece9d8;"></div>
<span class="t" style="left:5px;top:455px;font-size:7px;color:#222;transform:scaleX(0.86);">PlanoC</span>
<span class="t" style="left:32.6px;top:455px;font-size:7px;color:#222;transform:scaleX(0.95);">x 2.75</span>
<span class="t" style="left:81.6px;top:455px;font-size:7px;color:#222;transform:scaleX(0.95);">y 1.85</span>
<span class="t" style="left:130.6px;top:455px;font-size:7px;color:#222;transform:scaleX(0.95);">z 0.00</span>
<span class="t" style="left:237px;top:455px;font-size:7px;color:#222;transform:scaleX(0.86);">Predeterminada</span>
<span class="t" style="left:327px;top:455px;font-size:7px;color:#222;transform:scaleX(0.95);">Forzado</span>
<span class="t" style="left:363.7px;top:455px;font-size:7px;color:#222;transform:scaleX(0.98);">Orto</span>
<span class="t" style="left:393px;top:455px;font-size:7px;color:#222;transform:scaleX(0.86);">Planar</span>
<div style="left:230px;top:455px;width:6px;height:6px;background:#000;"></div>
<span class="t" style="left:423px;top:455px;font-size:7px;color:#111;transform:scaleX(0.9);font-weight:bold;">Re</span>
<div style="left:0px;top:462px;width:640px;height:1px;background:#d8e0ea;"></div>
<div style="left:0px;top:463px;width:640px;height:17px;background:linear-gradient(#5a9cf8 0px,#3474e8 1.5px,#2a62dc 3px,#245ddb 9px,#2258d4 14px,#1c4cbc 17px);"></div>
<div style="left:0px;top:463px;width:57px;height:17px;background:linear-gradient(#5ab85a 0px,#44a844 3px,#3a9e3a 10px,#2e862e 17px);border-radius:0 9px 9px 0;box-shadow:inset 2px 0 2px #226a22;"></div>
<svg style="left:7px;top:466px;" width="10" height="11" viewBox="0 0 10 11"><path d="M1.5 2 Q3 1 4.5 1.8 V5 Q3 4.4 1.5 5.2 Z" fill="#d86a48"/><path d="M5 1.8 Q7 2.4 9 1 V4.6 Q7 5.8 5 5 Z" fill="#78b850"/><path d="M1.5 5.8 Q3 5 4.5 5.7 V9 Q3 8.4 1.5 9.2 Z" fill="#5a88c8"/><path d="M5 5.7 Q7 6.3 9 5.2 V8.6 Q7 9.8 5 9 Z" fill="#e0c048"/></svg>
<span class="t" style="left:19px;top:467.5px;font-size:10px;color:#fff;transform:scaleX(0.95);font-weight:bold;font-style:italic;">Inicio</span>
<div style="left:62px;top:464.5px;width:85px;height:14.5px;background:linear-gradient(#4a90f6,#3a82f0 50%,#347aea);border-radius:3px;"></div>
<svg style="left:68px;top:466px;" width="10" height="11" viewBox="0 0 10 11"><circle cx="5" cy="5.5" r="4" fill="#d04020"/><circle cx="5.5" cy="5" r="2" fill="#f8d0a0"/></svg>
<span class="t" style="left:79px;top:468.5px;font-size:7px;color:#fff;transform:scaleX(0.9);">Sin título - Dr.PICZA</span>
<div style="left:151px;top:464.5px;width:89px;height:14.5px;background:linear-gradient(#1a48b0,#1e4cb4 50%,#2250bc);border-radius:3px;"></div>
<svg style="left:158px;top:466px;" width="9" height="11" viewBox="0 0 9 11"><rect x="0" y="1" width="8" height="9" fill="#1a2448"/><path d="M1.5 2.5 L4 5 L6.5 4 L6 7.5 L3.5 8.5 L2.5 6 Z" fill="#e8e8f0"/></svg>
<span class="t" style="left:168px;top:468.5px;font-size:7px;color:#fff;transform:scaleX(0.91);">Sin título - Rhinoceros...</span>
<div style="left:525px;top:463px;width:115px;height:17px;background:linear-gradient(#1ca0f4 0px,#0c90e8 3px,#0c8ae0 12px,#0a78d0 17px);border-left:1px solid #0a5ab8;"></div>
<svg style="left:0px;top:0px;pointer-events:none" width="640" height="480" viewBox="0 0 640 480"><path d="M531 474 L534 468.5 L538 470 L536 475.5 Z" fill="#c090c8"/><path d="M532 472 L535 475 M535 472 L532 475" stroke="#e02020" stroke-width="1.2"/><rect x="540" y="467" width="9" height="9" fill="#102048"/><path d="M542 470 L545 473 L547 470" stroke="#e8d0f0" stroke-width="1.3" fill="none"/><rect x="549.5" y="467" width="6" height="9" fill="#102048"/><path d="M551 469 L553 476 M554 471 L557 474" stroke="#fff" stroke-width="1.1" fill="none"/><path d="M552 475 Q556 478 559 474" stroke="#cfe" stroke-width="0.8" fill="none"/><circle cx="565" cy="471.8" r="3.6" fill="#f0e890" stroke="#70a040" stroke-width="0.7"/><rect x="564.4" y="469.5" width="1.2" height="3.5" fill="#806010"/><circle cx="574" cy="472" r="3.6" fill="#e8f0f8" stroke="#8098b8" stroke-width="0.7"/><ellipse cx="574" cy="472.5" rx="2" ry="1.2" fill="#a0b8d0"/><path d="M581 469.5 Q583.5 468.5 584 470.5 Q584 474 581 475.5" stroke="#d8e4f4" stroke-width="1.1" fill="none"/><path d="M585 468.5 L586 470" stroke="#d8e4f4"/><circle cx="594.2" cy="472.5" r="3.5" fill="#e8d040" stroke="#60a030" stroke-width="0.8"/><path d="M592.5 473.5 L594 471 L596 473" stroke="#406020" stroke-width="0.9" fill="none"/></svg>
<span class="t" style="left:604px;top:468.5px;font-size:7px;color:#fff;transform:scaleX(0.9);">12:09 p.m.</span>
<svg style="left:428px;top:432px;" width="118" height="40" viewBox="0 0 118 40"><path d="M7 1.5 H111 Q115.5 1.5 115.5 6 V25 Q115.5 29.5 111 29.5 H107 L107 37.5 L100 29.5 H7 Q2.5 29.5 2.5 25 V6 Q2.5 1.5 7 1.5 Z" fill="#ffffe1" stroke="#333" stroke-width="1"/></svg>
<svg style="left:437px;top:437px;" width="9" height="10" viewBox="0 0 9 10"><circle cx="4.5" cy="4.5" r="4" fill="#f0f4ff" stroke="#8898c0" stroke-width="0.7"/><rect x="3.8" y="1.5" width="1.4" height="1.2" fill="#2040a0"/><rect x="3.8" y="3.5" width="1.4" height="4" fill="#2040a0"/><path d="M2 8 L4 10" stroke="#8898c0"/></svg>
<span class="t" style="left:449.5px;top:438.3px;font-size:7px;color:#111;transform:scaleX(0.925);font-weight:bold;">Conexión de área local 4</span>
<div style="left:531.5px;top:437px;width:8px;height:8px;background:#fff;border:1px solid #b8b8a0;"></div>
<svg style="left:531.5px;top:437px;" width="8" height="8" viewBox="0 0 8 8"><path d="M2.5 2.5 L5.5 5.5 M5.5 2.5 L2.5 5.5" stroke="#999" stroke-width="0.9"/></svg>
<span class="t" style="left:436px;top:449.7px;font-size:6.5px;color:#222;transform:scaleX(0.91);">El cable de red está desconectado</span></body></html>
